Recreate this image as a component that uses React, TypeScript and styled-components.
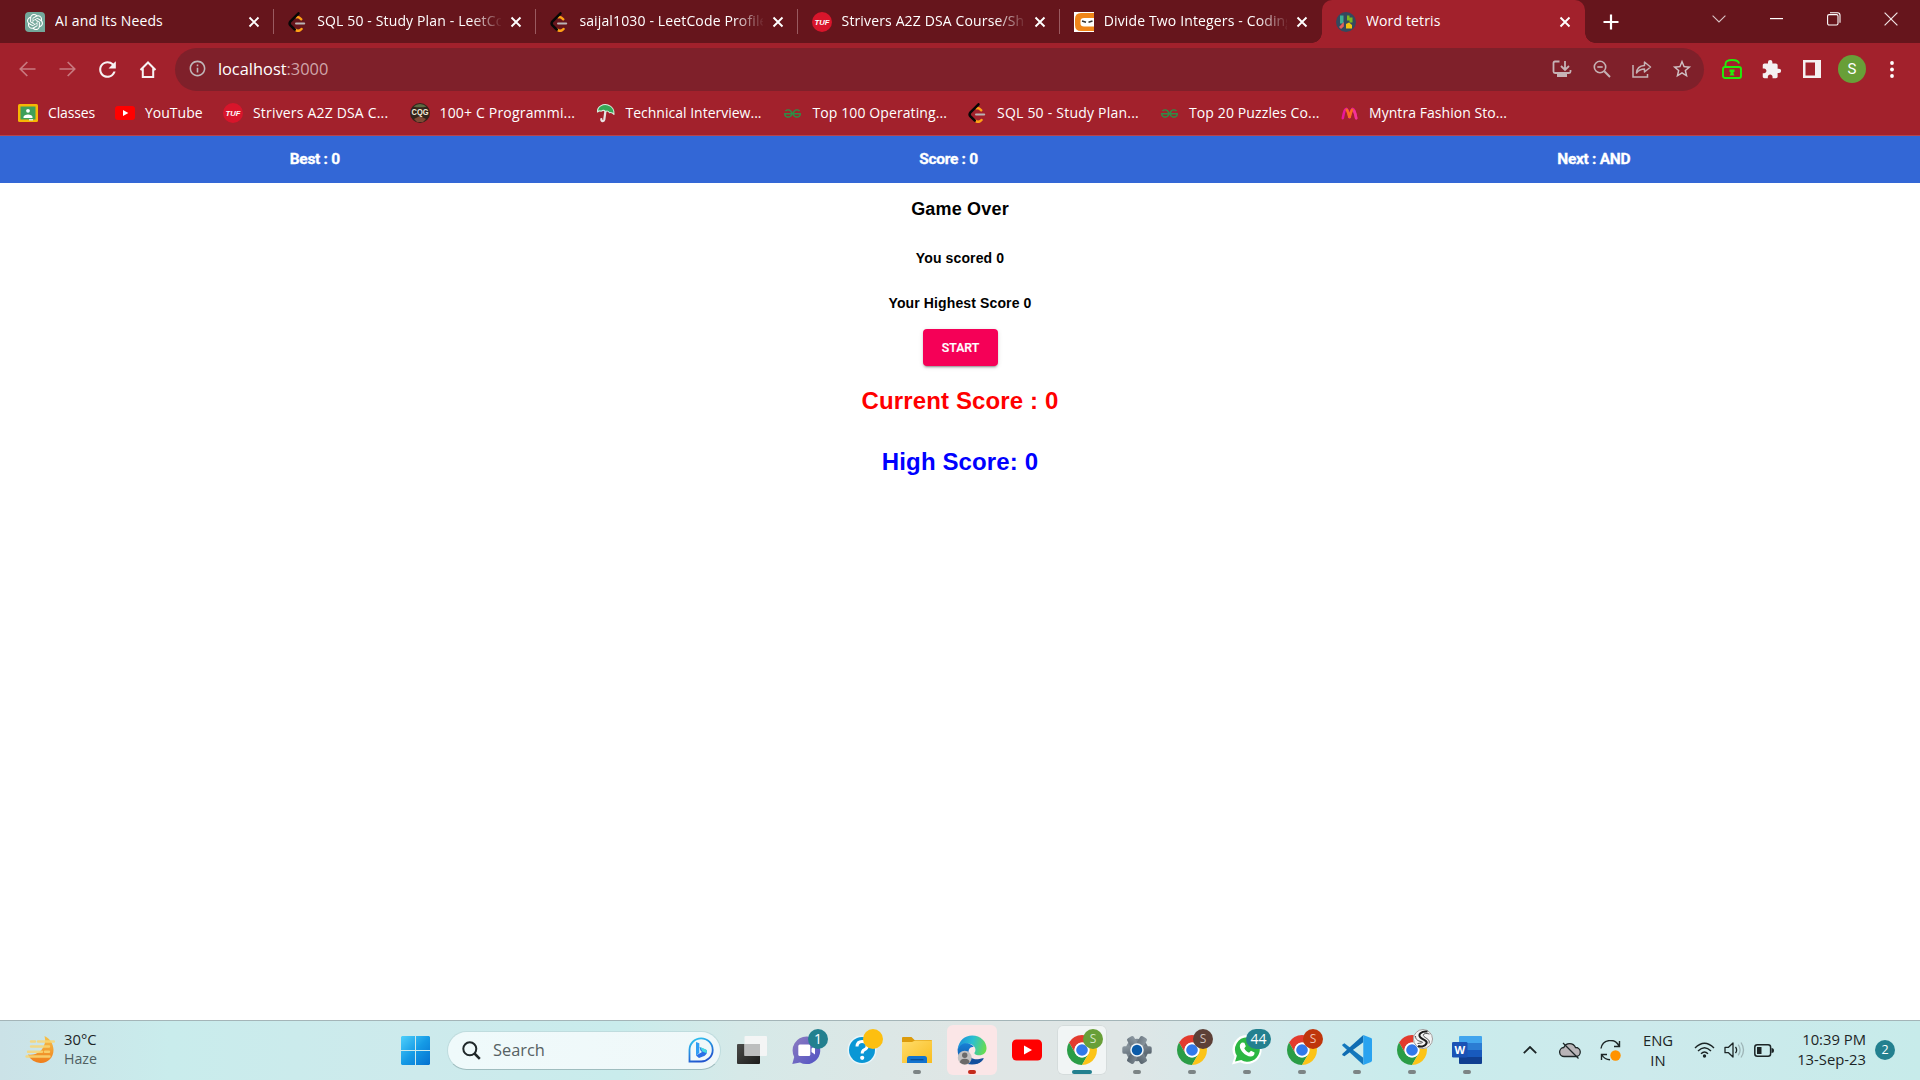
import React from "react";
import styled, { createGlobalStyle, css } from "styled-components";
import { SiOpenai, SiGeeksforgeeks } from "react-icons/si";
import { MdExtension, MdRefresh, MdInfoOutline, MdStarBorder } from "react-icons/md";

const UI = `"Open Sans", "Noto Sans", sans-serif`;

const Global = createGlobalStyle`
  * { box-sizing: border-box; }
  html, body { margin: 0; padding: 0; background: #fff; }
  svg { display: block; flex: none; }
`;

const Screen = styled.div`
  width: 1920px;
  height: 1080px;
  display: flex;
  flex-direction: column;
  overflow: hidden;
  background: #fff;
  font-family: ${UI};
`;

/* ---------- tab strip ---------- */

const TabStrip = styled.div`
  height: 43px;
  display: flex;
  background: #66151c;
  padding-left: 11.5px;
`;

const TabBox = styled.div<{ $active?: boolean; $divider?: boolean }>`
  position: relative;
  width: 262.2px;
  height: 43px;
  flex: none;
  display: flex;
  align-items: center;
  padding: 0 8px 0 13.5px;
  color: #fff;
  ${(p) =>
    p.$divider &&
    css`
      &::after {
        content: "";
        position: absolute;
        right: 0;
        top: 9px;
        width: 1px;
        height: 25px;
        background: #9a5a60;
      }
    `}
  ${(p) =>
    p.$active &&
    css`
      background: #a2212c;
      border-radius: 10px 10px 0 0;
      &::before,
      &::after {
        content: "";
        position: absolute;
        bottom: 0;
        width: 10px;
        height: 10px;
      }
      &::before {
        left: -10px;
        background: radial-gradient(circle at 0 0, transparent 9.5px, #a2212c 10px);
      }
      &::after {
        right: -10px;
        background: radial-gradient(circle at 100% 0, transparent 9.5px, #a2212c 10px);
      }
    `}
`;

const Favicon = styled.span`
  width: 20px;
  height: 20px;
  flex: none;
  display: flex;
  align-items: center;
  justify-content: center;
  margin-right: 10px;
`;

const TabTitle = styled.span<{ $fade?: boolean }>`
  flex: 1;
  min-width: 0;
  overflow: hidden;
  white-space: nowrap;
  font-size: 14px;
  line-height: 20px;
  padding-bottom: 2px;
  letter-spacing: 0.14px;
  ${(p) => p.$fade && css`mask-image: linear-gradient(90deg, #000 84%, transparent 101%);`}
`;

const CloseBox = styled.span`
  width: 24px;
  margin-left: 3px;
  display: flex;
  justify-content: center;
`;

const NewTab = styled.span`
  width: 28px;
  margin-left: 12.5px;
  display: flex;
  align-items: center;
  justify-content: center;
`;

const WindowControls = styled.div`
  margin-left: auto;
  height: 38px;
  display: flex;
`;

const ControlBox = styled.span`
  width: 57.5px;
  display: flex;
  align-items: center;
  justify-content: center;
`;

/* ---------- toolbar ---------- */

const Toolbar = styled.div`
  height: 53px;
  display: flex;
  align-items: center;
  background: #a2212c;
  padding: 0 8px 1px 7.5px;
`;

const Slot = styled.span`
  width: 40.1px;
  flex: none;
  display: flex;
  align-items: center;
  justify-content: center;
`;

const Omnibox = styled.div`
  height: 43px;
  width: 1530px;
  margin: 1px 7.600px 0 7px;
  border-radius: 22px;
  background: #7f202a;
  display: flex;
  align-items: center;
  padding: 0 2px 2px 13px;
`;

const Url = styled.span`
  margin-left: 11px;
  margin-right: auto;
  font-size: 16.4px;
  line-height: 24px;
  color: #fff;
`;

const Port = styled.span`
  color: #d0a5a9;
`;

const Avatar = styled.span`
  width: 28px;
  height: 28px;
  border-radius: 50%;
  background: #689f38;
  color: #fff;
  font: 400 15px/28px Roboto, sans-serif;
  text-align: center;
`;

/* ---------- bookmarks ---------- */

const Bookmarks = styled.div`
  height: 40px;
  display: flex;
  background: #a2212c;
  border-bottom: 1px solid #b5444d;
  padding: 0 0 5px 18px;
`;

const Bookmark = styled.div`
  display: flex;
  align-items: center;
  margin-right: 20px;
`;

const BookmarkLabel = styled.span<{ $w: number; $ls?: number }>`
  width: ${(p) => p.$w}px;
  font-size: 14px;
  line-height: 20px;
  padding-bottom: 1px;
  letter-spacing: ${(p) => p.$ls ?? 0}px;
  white-space: nowrap;
  color: #fff;
`;

/* ---------- page ---------- */

const ScoreBar = styled.header`
  height: 47px;
  background: #3367d6;
  display: flex;
  align-items: center;
  justify-content: space-around;
  padding-bottom: 2px;
`;

const ScoreItem = styled.span`
  color: #fff;
  font: 700 15.5px/20px Roboto, sans-serif;
  letter-spacing: -0.3px;
  -webkit-text-stroke: 0.3px #fff;
`;

const Game = styled.main`
  flex: 1;
  display: flex;
  flex-direction: column;
  align-items: center;
  font-family: "Liberation Sans", Arial, sans-serif;
  color: #000;
`;

const GameOver = styled.h3`
  margin: 15px 0 0;
  font-size: 18px;
  line-height: 22px;
  letter-spacing: 0.18px;
`;

const Note = styled.h5<{ $top: number }>`
  margin: ${(p) => p.$top}px 0 0;
  font-size: 14px;
  line-height: 16px;
  letter-spacing: 0.12px;
`;

const StartButton = styled.button`
  margin: 18px 0 0 1px;
  width: 75px;
  height: 37px;
  padding: 1px 0 0;
  border: 0;
  border-radius: 4px;
  background: #f50057;
  color: #fff;
  font: 500 12.300px/20px Roboto, sans-serif;
  -webkit-text-stroke: 0.2px #fff;
  box-shadow: 0 3px 1px -2px rgba(0, 0, 0, 0.2), 0 2px 2px rgba(0, 0, 0, 0.14), 0 1px 5px rgba(0, 0, 0, 0.12);
`;

const BigScore = styled.h2<{ $color: string; $top: number }>`
  margin: ${(p) => p.$top}px 0 0;
  font-size: 24px;
  line-height: 28px;
  letter-spacing: 0.12px;
  color: ${(p) => p.$color};
`;

/* ---------- taskbar ---------- */

const Taskbar = styled.footer`
  height: 60px;
  display: flex;
  align-items: center;
  padding-bottom: 1px;
  border-top: 1px solid #a4b5b8;
  background: linear-gradient(90deg, #cbe2e7 0, #c9ecec 170px, #cdeaec 420px, #c9ecec 620px, #d6e9e8 740px, #dfe6e5 960px, #dfe6e6 1120px, #d0e9ec 1290px, #c9ecec 1400px, #cdeaec 1640px, #c7ebea 1920px);
`;

const Weather = styled.div`
  width: 388px;
  display: flex;
  align-items: center;
  padding-left: 24.500px;
  gap: 9.500px;
`;

const Stack = styled.div<{ $align?: string; $w?: number; $lift?: number }>`
  display: flex;
  flex-direction: column;
  text-align: ${(p) => p.$align ?? "left"};
  width: ${(p) => (p.$w ? p.$w + "px" : "auto")};
  padding-bottom: ${(p) => p.$lift ?? 0}px;
  font-size: 14.800px;
  line-height: 20px;
  color: #1c2526;
  white-space: nowrap;
`;

const Muted = styled.span`
  font-size: 14.200px;
  color: #4f6062;
`;

const SearchPill = styled.div`
  width: 274px;
  height: 39px;
  margin: 0 3.500px 0 4px;
  border-radius: 20px;
  background: linear-gradient(90deg, #effafb, #f0f8f9);
  border: 1px solid #bfdcde;
  border-bottom-color: #9fbdbf;
  display: flex;
  align-items: center;
  padding: 0 6px 0 14px;
`;

const SearchText = styled.span`
  flex: 1;
  margin-left: 12px;
  font-size: 16.400px;
  line-height: 22px;
  color: #566163;
`;

const TaskSlot = styled.div`
  width: 55px;
  height: 58px;
  flex: none;
  display: flex;
  align-items: center;
  justify-content: center;
`;

const Tile = styled.div<{ $tint?: string; $edge?: string }>`
  position: relative;
  width: 50px;
  height: 50px;
  border-radius: 6px;
  background: ${(p) => p.$tint ?? "transparent"};
  box-shadow: ${(p) => (p.$edge ? `inset 0 0 0 1px ${p.$edge}` : "none")};
  display: flex;
  align-items: center;
  justify-content: center;
`;

const Dot = styled.span<{ $w: number; $color: string }>`
  position: absolute;
  left: 50%;
  bottom: 1px;
  width: ${(p) => p.$w}px;
  height: 4px;
  margin-left: ${(p) => -p.$w / 2}px;
  border-radius: 2px;
  background: ${(p) => p.$color};
`;

const Badge = styled.span<{ $bg: string; $fg?: string; $w?: number; $size?: number }>`
  position: absolute;
  top: 4px;
  left: ${(p) => (p.$w ? 24 : 26)}px;
  width: ${(p) => p.$w ?? 20}px;
  height: 20px;
  border-radius: 10px;
  background: ${(p) => p.$bg};
  color: ${(p) => p.$fg ?? "#fff"};
  font-size: ${(p) => p.$size ?? 14}px;
  line-height: 20px;
  text-align: center;
`;

const Tray = styled.div`
  margin-left: auto;
  display: flex;
  align-items: center;
  padding-right: 25px;
`;

const TraySlot = styled.span<{ $w: number }>`
  width: ${(p) => p.$w}px;
  display: flex;
  justify-content: center;
`;

const Count = styled.span`
  width: 20px;
  height: 20px;
  margin-left: 9px;
  border-radius: 50%;
  background: #23808f;
  color: #fff;
  font-size: 12.500px;
  line-height: 19px;
  text-align: center;
`;

/* ---------- drawings ---------- */

const Close = () => (
  <svg width="12" height="12" viewBox="0 0 12 12" stroke="#fff" strokeWidth="1.9"><path d="M1.5 1.5l9 9M10.5 1.5l-9 9" /></svg>
);

const OpenAi = () => (
  <svg width="20" height="20" viewBox="0 0 20 20">
    <path d="M4 0h12a4 4 0 014 4v16H4a4 4 0 01-4-4V4a4 4 0 014-4z" fill="#74a89b" />
    <SiOpenai x="2" y="2" width="16" height="16" color="#fff" />
  </svg>
);

const LeetCode = () => (
  <svg width="20" height="20" viewBox="0 0 20 20" fill="none" strokeWidth="2.5" strokeLinecap="round">
    <path d="M9.500 5.300c1.500-.8 3 0 4.700 2M8.500 17.800c2 1.700 4 1.300 6-.8" stroke="#ffa116" />
    <path d="M11.500 1.300L3.500 9.300c-1.200 1.400-1.200 2.800 0 4.200l4.300 4.200" stroke="#070706" />
    <path d="M9 11.500h8.200" stroke="#b9b4b4" strokeWidth="2" />
  </svg>
);

const Tuf = () => (
  <svg width="20" height="20" viewBox="0 0 20 20">
    <circle cx="10" cy="10" r="10" fill="#d8152b" />
    <text x="10" y="12.500" textAnchor="middle" fontSize="6.500" fontWeight="700" fontStyle="italic" fontFamily="Liberation Sans, sans-serif" fill="#fff" textLength="15" lengthAdjust="spacingAndGlyphs">TUF</text>
  </svg>
);

const CodingNinjas = () => (
  <svg width="20" height="20" viewBox="0 0 20 20">
    <path d="M0 0h20v20H0z" fill="#fff" />
    <path d="M20 1H7Q1 1 1 7v6q0 6 6 6h13v-4.500H10q-3.500 0-3.500-3V9q0-3 3.500-3h10z" fill="#f08519" />
    <path d="M8 9l4 1.200M14.500 10.200l4-1.200" stroke="#333" strokeWidth="1.500" />
  </svg>
);

const WordTetris = () => (
  <svg width="20" height="20" viewBox="0 0 20 20">
    <circle cx="10" cy="10" r="10" fill="#34495e" />
    <path d="M4 3.500h3.500v8H4z" fill="#3fae95" />
    <path d="M11 3.500h2.500v2h3v5h-3V8.500H11z" fill="#7cb51f" />
    <path d="M7.800 10v4.500L5 17l-2-2z" fill="#e2605c" />
    <path d="M10 12l3-1.500 3 2.500v3.500h-6z" fill="#f1c40f" />
  </svg>
);

const Classroom = () => (
  <svg width="20" height="18" viewBox="0 0 20 18">
    <rect width="20" height="18" rx="1.500" fill="#f6b704" />
    <rect x="2.500" y="2.500" width="15" height="13" fill="#3f9f59" />
    <circle cx="10" cy="6.800" r="1.900" fill="#fff" />
    <path d="M5.500 13c0-3.500 9-3.500 9 0v1h-9z" fill="#fff" />
    <path d="M11 15h4v1.500h-4z" fill="#d5e8da" />
  </svg>
);

const YouTube = ({ w, h }: { w: number; h: number }) => (
  <svg width={w} height={h} viewBox="0 0 30 21">
    <rect width="30" height="21" rx="4.500" fill="#f00" />
    <path d="M12 6v9l8-4.500z" fill="#fff" />
  </svg>
);

const Cqg = () => (
  <svg width="20" height="20" viewBox="0 0 20 20">
    <circle cx="10" cy="10" r="10" fill="#33241b" />
    <path d="M3.500 3.500a9.500 9.500 0 0113 0l-3 .8H6.500z" fill="#5d6a42" />
    <path d="M4 16l6-3 6 3-3 3H7z" fill="#7d4a35" />
    <text x="10" y="11.500" textAnchor="middle" fontSize="9" fontWeight="700" fontFamily="Liberation Sans, sans-serif" fill="#f5eddc" textLength="17" lengthAdjust="spacingAndGlyphs">CQG</text>
  </svg>
);

const Umbrella = () => (
  <svg width="20" height="20" viewBox="0 0 20 20">
    <path d="M9.500 7.500l-1.200 9c-.4 2.200-3.200 2-3-.3" fill="none" stroke="#e8e3e3" strokeWidth="2.200" strokeLinecap="round" />
    <path d="M1.500 9C1 3.500 7 .5 12 2c4 1.200 6.500 5 6 9.500-1.500-1.800-3-2.200-4.500-1.800-1-1.500-2.600-2-4-1.300-1.300-1.200-3-1.200-4.200-.2C4 7.700 2.500 8 1.500 9z" fill="#35a857" stroke="#d9efe0" strokeWidth="1.100" strokeLinejoin="round" />
  </svg>
);

const Myntra = () => (
  <svg width="17" height="13" viewBox="0 0 18 14" fill="none" strokeLinecap="round" strokeWidth="2.800">
    <path d="M1.800 12Q3.500 2 5.500 2q1.500 0 3.500 9" stroke="#e8179b" />
    <path d="M9 11q2-9 3.500-9 2 0 3.700 10" stroke="#e8179b" />
    <path d="M6 3q1.200 1 3 8.500Q10.800 4 12 3" stroke="#fa6b21" />
    <path d="M14 4.500q1.200 2.500 2.200 7.500" stroke="#f43397" />
  </svg>
);

const Chrome = () => (
  <svg width="30" height="30" viewBox="0 0 48 48">
    <path d="M44.780 12A24 24 0 003.220 12L13.610 30A12 12 0 0124 12z" fill="#e33b2e" />
    <path d="M3.220 12A24 24 0 0024 48L34.390 30A12 12 0 0113.610 30z" fill="#2a9d46" />
    <path d="M24 48A24 24 0 0044.780 12H24A12 12 0 0134.390 30z" fill="#fcc418" />
    <circle cx="24" cy="24" r="12" fill="#fff" />
    <circle cx="24" cy="24" r="9.300" fill="#3279ea" />
  </svg>
);

const Haze = () => (
  <svg width="30" height="30" viewBox="0 0 30 30">
    <defs><linearGradient id="moon" x1="0" y1="0" x2="0" y2="1"><stop stopColor="#f5c34d" /><stop offset="1" stopColor="#ef7d1a" /></linearGradient></defs>
    <path d="M19.500 1A14.500 14.500 0 013 19.500a13.200 13.200 0 0013 8.500c7 0 12.500-5.500 12.500-13 0-6.500-4-11.500-9-14z" fill="url(#moon)" />
    <path d="M6 6.500h4M13 6.500h16M6 11.500h18M3 16.700h14M20 16.700h4M1.500 21.500h23" stroke="#f9d774" strokeWidth="2.400" strokeLinecap="round" opacity=".85" />
  </svg>
);

const Windows = () => (
  <svg width="29" height="29" viewBox="0 0 29 29">
    <defs><linearGradient id="win" x1="0" y1="0" x2="1" y2="1"><stop stopColor="#4fd0fb" /><stop offset=".5" stopColor="#159be6" /><stop offset="1" stopColor="#0470cf" /></linearGradient></defs>
    <path d="M1 0h13v14H0V1zM15 0h13l1 1v13H15zM0 15h14v14H1l-1-1zM15 15h14v13l-1 1H15z" fill="url(#win)" />
  </svg>
);

const Magnifier = () => (
  <svg width="19" height="19" viewBox="0 0 19 19" fill="none" stroke="#20282a" strokeWidth="2"><circle cx="7.800" cy="7.800" r="6.500" /><path d="M12.500 12.500l5.300 5.300" strokeWidth="2.500" /></svg>
);

const Bing = () => (
  <svg width="26" height="26" viewBox="0 0 26 26">
    <defs><linearGradient id="bing" x1="0" y1="0" x2=".4" y2="1"><stop stopColor="#2ecbf2" /><stop offset="1" stopColor="#2156cf" /></linearGradient></defs>
    <path d="M1.500 24.500V13A11.600 11.600 0 1113 24.500z" fill="none" stroke="url(#bing)" strokeWidth="1.800" />
    <path d="M8 5l3.300 1.200V16l-3.300 2.500z" fill="#2f9df4" />
    <path d="M11.500 10l7 3c1.500 2.500-.5 5.500-3 6.300l-4.500 1.700-3-2.500 6-3.500-1.500-1.500z" fill="#2a6fe6" />
    <path d="M12 10l6 2.600c1 1 1.200 2.500.6 3.600l-4.300-1.700z" fill="#45d6e0" />
  </svg>
);

const TaskView = () => (
  <svg width="30" height="28" viewBox="0 0 30 28">
    <defs><linearGradient id="tv" x1="0" y1="0" x2="1" y2="1"><stop stopColor="#4b4b49" /><stop offset="1" stopColor="#1c1c1b" /></linearGradient></defs>
    <rect y="8" width="23" height="20" rx="1" fill="url(#tv)" />
    <rect x="7.500" width="22.500" height="20" rx="1" fill="#f5f6f6" opacity=".95" />
    <path d="M7.500 8H23v12H7.500z" fill="#bdbebe" />
  </svg>
);

const Chat = () => (
  <svg width="30" height="30" viewBox="0 0 30 30">
    <defs><linearGradient id="chat" x1="0" y1="0" x2="1" y2="1"><stop stopColor="#8f7dc0" /><stop offset="1" stopColor="#4f52c4" /></linearGradient></defs>
    <path d="M14.500 1.500a13.800 13.800 0 11-6.500 26L.3 29 2.200 22A14 14 0 0114.500 1.500z" fill="url(#chat)" />
    <rect x="6.300" y="9.500" width="12" height="11.500" rx="1.500" fill="#fff" />
    <path d="M19.500 13.500L23 11v8.500L19.500 17z" fill="#fff" />
  </svg>
);

const Help = () => (
  <svg width="30" height="30" viewBox="0 0 30 30">
    <circle cx="15" cy="15" r="14.500" fill="#e9f6fa" />
    <circle cx="15" cy="15" r="13" fill="#0a97d5" />
    <path d="M10 11.500q.3-5 5-5 5.200 0 5.200 4.400 0 2.600-3 4-2 1-2 3.600" fill="none" stroke="#fff" strokeWidth="3" />
    <circle cx="15.200" cy="22.800" r="2.100" fill="#fff" />
  </svg>
);

const Folder = () => (
  <svg width="30" height="26" viewBox="0 0 30 26">
    <defs><linearGradient id="fold" x1="0" y1="0" x2="1" y2="1"><stop stopColor="#ffdc6a" /><stop offset="1" stopColor="#f9bd20" /></linearGradient></defs>
    <path d="M0 1q0-1 1-1h8.500l3 3H29q1 0 1 1v4H0z" fill="#dc9b0c" />
    <path d="M0 5h10l3-1.500h17V26H0z" fill="url(#fold)" />
    <path d="M5 26v-4.500q0-2.500 2.500-2.500h15q2.500 0 2.500 2.500V26z" fill="#1273cf" />
    <path d="M8.500 22.700h13" stroke="#0a4b91" strokeWidth="1.200" />
  </svg>
);

const Edge = () => (
  <svg width="30" height="30" viewBox="0 0 31 31">
    <defs>
      <linearGradient id="e1" x1="0" y1=".3" x2="1" y2=".5"><stop stopColor="#1b8fdc" /><stop offset=".5" stopColor="#2bbfd0" /><stop offset="1" stopColor="#68dc50" /></linearGradient>
      <linearGradient id="e2" x1="0" y1="0" x2="0" y2="1"><stop stopColor="#1880d6" /><stop offset="1" stopColor="#0f4f9e" /></linearGradient>
    </defs>
    <path d="M.6 15C2 5.500 8 .5 15.700.5 24.500.5 30.500 7 30.500 13.500c0 5-3.500 7.500-7.500 7.500-4 0-5.500-1.500-4.800-2.800C20.500 15 18.500 10 12.500 9 7 8.500 2.500 11 .6 15z" fill="url(#e1)" />
    <path d="M.6 15C3 9.500 8 7.800 12.500 9c3 .8 4.300 2.200 4.800 3.500-2-.8-5 .5-5.500 4.500-.5 6 5 11.500 13 9.500l2-1C24 29 20 30.500 15.500 30.500 7 30.500.5 24 .6 15z" fill="url(#e2)" />
    <path d="M12 17c-.5 6 5 9 11 7.800 2-.4 3.500-1 4.600-.8.600.500-2.500 4-6.600 5.500C14 31 9 24 12 17z" fill="#134f9c" />
    <circle cx="8" cy="23.500" r="7.200" fill="#c3c1c0" />
    <circle cx="8" cy="21" r="2.800" fill="#6b6a69" />
    <path d="M3 28.500q0-4 5-4t5 4q-5 4-10 0z" fill="#6b6a69" />
  </svg>
);

const Gear = () => (
  <svg width="30" height="30" viewBox="0 0 31 31">
    <defs><linearGradient id="gear" x1="0" y1="0" x2="1" y2="1"><stop stopColor="#8e9aa3" /><stop offset="1" stopColor="#56626c" /></linearGradient></defs>
    <g fill="url(#gear)">
      <circle cx="15.500" cy="15.500" r="11.700" />
      {[0, 60, 120].map((a) => (
        <rect key={a} x=".3" y="11.500" width="30.400" height="8" rx="2" transform={`rotate(${a} 15.500 15.500)`} />
      ))}
    </g>
    <circle cx="15.500" cy="15.500" r="7" fill="#eef5fa" />
    <circle cx="15.500" cy="15.500" r="5.400" fill="#0a5aa8" />
  </svg>
);

const WhatsApp = () => (
  <svg width="30" height="30" viewBox="0 0 31 31">
    <path d="M15.800 0A15 15 0 118.500 28.200L0 30.500l2.600-8A15 15 0 0115.800 0z" fill="#fff" />
    <path d="M15.800 2.200a12.700 12.700 0 11-6.300 23.600L3.200 27.500l1.800-6A12.700 12.700 0 0115.800 2.200z" fill="#2cb742" />
    <path d="M10.300 7.800l2.500.1 1.500 3.800-1.600 2c1 2.200 2.700 3.600 4.900 4.700l2-2 3.700 1.800c.2 2.600-1.600 4-4 4.100C13.500 21.500 8.200 16 8.100 11.500c0-1.600.8-3 2.200-3.700z" fill="#fff" />
  </svg>
);

const VsCode = () => (
  <svg width="30" height="30" viewBox="0 0 31 31">
    <path d="M2.500 8.500L22 23.500V31L.5 11.200q-.6-.8 0-1.400z" fill="#1478bd" />
    <path d="M2.500 22L22 7.500V0L.5 19.500q-.6.8 0 1.400z" fill="#0f6cb2" />
    <path d="M22 0l8 3.200q1 .5 1 1.500v21.600q0 1-1 1.500L22 31z" fill="#29a3f0" />
  </svg>
);

const SwirlBadge = styled(Badge)`
  display: flex;
`;

const Swirl = () => (
  <svg width="20" height="20" viewBox="0 0 20 20" fill="none">
    <circle cx="10" cy="10" r="9.500" fill="#f4f4f4" stroke="#9a9a9a" />
    <path d="M14.500 2.500C8 2 4.500 5.500 7.500 8.500s7.500 2.500 6 6-6.500 3.500-8.500 2.500" stroke="#1c1c1c" strokeWidth="2" />
    <path d="M16.500 5c-5-1.500-7.500.5-5.500 2.500s6.500 3 5 7M2.500 7c0 4 3 5 5.500 5.500s2.500 1.500-3.500 2" stroke="#555" strokeWidth="1" />
  </svg>
);

const Word = () => (
  <svg width="30" height="28" viewBox="0 0 30 28">
    <path d="M8 0h21q1 0 1 1v6H7V1q0-1 1-1z" fill="#41a5ee" />
    <path d="M7 7h23v7H7z" fill="#2b7cd3" />
    <path d="M7 14h23v7H7z" fill="#185abd" />
    <path d="M7 21h23v6q0 1-1 1H8q-1 0-1-1z" fill="#103f91" />
    <rect y="6" width="15.500" height="15.500" rx="1.300" fill="#1a52b5" />
    <text x="7.700" y="17.700" textAnchor="middle" fontSize="11" fontWeight="700" fontFamily="Open Sans, sans-serif" fill="#fff">W</text>
  </svg>
);

/* ---------- data ---------- */

const tabs = [
  { title: "AI and Its Needs", icon: <OpenAi /> },
  { title: "SQL 50 - Study Plan - LeetCode", icon: <LeetCode />, fade: true },
  { title: "saijal1030 - LeetCode Profile", icon: <LeetCode />, fade: true },
  { title: "Strivers A2Z DSA Course/Sheet", icon: <Tuf />, fade: true },
  { title: "Divide Two Integers - Coding Ninjas", icon: <CodingNinjas />, fade: true },
  { title: "Word tetris", icon: <WordTetris />, active: true },
];

const bookmarks = [
  { label: "Classes", w: 47, ls: -0.15, icon: <Classroom /> },
  { label: "YouTube", w: 58, icon: <YouTube w={20} h={14} /> },
  { label: "Strivers A2Z DSA C...", w: 136.5, ls: 0.18, icon: <Tuf /> },
  { label: "100+ C Programmi...", w: 136, ls: 0.18, icon: <Cqg /> },
  { label: "Technical Interview...", w: 137, icon: <Umbrella /> },
  { label: "Top 100 Operating...", w: 134.5, ls: 0.1, icon: <SiGeeksforgeeks size={17} color="#2f8d46" /> },
  { label: "SQL 50 - Study Plan...", w: 142, ls: 0.22, icon: <LeetCode /> },
  { label: "Top 20 Puzzles Co...", w: 130, ls: 0.12, icon: <SiGeeksforgeeks size={17} color="#2f8d46" /> },
  { label: "Myntra Fashion Sto...", w: 138, ls: 0.05, icon: <Myntra /> },
];

const GREY = "#7c8485";
const apps = [
  { id: "taskview", icon: <TaskView /> },
  { id: "chat", icon: <Chat />, badge: <Badge $bg="#23808f">1</Badge> },
  { id: "help", icon: <Help />, badge: <Badge $bg="#fdbf10" /> },
  { id: "files", icon: <Folder />, dot: GREY },
  { id: "edge", icon: <Edge />, dot: "#c42b1c", tint: "#fbe6e7" },
  { id: "youtube", icon: <YouTube w={30} h={22} /> },
  { id: "chrome1", icon: <Chrome />, badge: <Badge $bg="#689f38" $fg="#d3e5c3" $size={12}>S</Badge>, dot: "#23808f", wide: true, tint: "#f1f5f5", edge: "#d5dcdc" },
  { id: "settings", icon: <Gear />, dot: GREY },
  { id: "chrome2", icon: <Chrome />, badge: <Badge $bg="#5d4037" $fg="#cdbfba" $size={12}>S</Badge>, dot: GREY },
  { id: "whatsapp", icon: <WhatsApp />, badge: <Badge $bg="#23808f" $w={25}>44</Badge>, dot: GREY },
  { id: "chrome3", icon: <Chrome />, badge: <Badge $bg="#bf360c" $fg="#f0c0b0" $size={12}>S</Badge>, dot: GREY },
  { id: "vscode", icon: <VsCode />, dot: GREY },
  { id: "chrome4", icon: <Chrome />, badge: <SwirlBadge $bg="#fff"><Swirl /></SwirlBadge>, dot: GREY },
  { id: "word", icon: <Word />, dot: GREY },
];

export default function App() {
  return (
    <Screen>
      <Global />
      <TabStrip>
        {tabs.map((t, i) => (
          <TabBox key={t.title} $active={t.active} $divider={i < 4}>
            <Favicon>{t.icon}</Favicon>
            <TabTitle $fade={t.fade}>{t.title}</TabTitle>
            <CloseBox><Close /></CloseBox>
          </TabBox>
        ))}
        <NewTab>
          <svg width="16" height="16" viewBox="0 0 16 16" stroke="#fff" strokeWidth="2.200"><path d="M8 .5v15M.5 8h15" /></svg>
        </NewTab>
        <WindowControls>
          <ControlBox><svg width="14" height="8" viewBox="0 0 14 8" fill="none" stroke="#d9c4c6" strokeWidth="1.100"><path d="M.6.6L7 7 13.400.6" /></svg></ControlBox>
          <ControlBox><svg width="13" height="2" viewBox="0 0 13 2"><path d="M0 0h13v1.200H0z" fill="#fff" /></svg></ControlBox>
          <ControlBox><svg width="14" height="14" viewBox="0 0 14 14" fill="none" stroke="#fff" strokeWidth="1.100"><rect x=".6" y="2.600" width="10.400" height="10.400" rx="1.500" /><path d="M3 .8h7.500q2.500 0 2.500 2.500v7.500" /></svg></ControlBox>
          <ControlBox><svg width="14" height="14" viewBox="0 0 14 14" stroke="#f0e4e5" strokeWidth="1.200"><path d="M.6.6l12.800 12.800M13.400.6L.6 13.400" /></svg></ControlBox>
        </WindowControls>
      </TabStrip>

      <Toolbar>
        <Slot><svg width="17" height="16" viewBox="0 0 17 16" fill="none" stroke="#c87a80" strokeWidth="1.700"><path d="M16.500 8H1.500M8.300 1L1.300 8l7 7" /></svg></Slot>
        <Slot><svg width="17" height="16" viewBox="0 0 17 16" fill="none" stroke="#c87a80" strokeWidth="1.700"><path d="M.5 8h15M8.700 1l7 7-7 7" /></svg></Slot>
        <Slot><MdRefresh size={25} color="#f7f2f3" /></Slot>
        <Slot><svg width="18" height="17" viewBox="0 0 18 17" fill="none" stroke="#f7f2f3" strokeWidth="2"><path d="M1.500 9L9 1.500 16.500 9M3.800 7.500V16h10.400V7.500" /></svg></Slot>
        <Omnibox>
          <MdInfoOutline size={19} color="#c0b6b9" />
          <Url>localhost<Port>:3000</Port></Url>
          <Slot><svg width="20" height="18" viewBox="0 0 20 18" fill="none" stroke="#c6b2b5" strokeWidth="1.800"><path d="M7.500 1.500H3q-1.500 0-1.500 1.500v8.500Q1.500 13 3 13h14q1.500 0 1.500-1.500V10M13 1v8M9 6l4 4 4-4" /><path d="M5 13h10v4H5z" fill="#c6b2b5" stroke="none" /></svg></Slot>
          <Slot><svg width="18" height="18" viewBox="0 0 18 18" fill="none" stroke="#c6b2b5" strokeWidth="1.600"><circle cx="7" cy="7" r="5.700" /><path d="M11.300 11.300l5.700 5.700" strokeWidth="2" /><path d="M4.300 7h5.400" /></svg></Slot>
          <Slot><svg width="20" height="18" viewBox="0 0 20 18" fill="none" stroke="#c6b2b5" strokeWidth="1.500"><path d="M1 5v12h14.500v-3" /><path d="M4.500 13q.5-7 8-7.500V2l6 5-6 5V9q-5 0-8 4z" strokeLinejoin="round" /></svg></Slot>
          <Slot><MdStarBorder size={22} color="#d0c1c4" /></Slot>
        </Omnibox>
        <Slot><svg width="20" height="20" viewBox="0 0 20 20" fill="none" stroke="#22ee0c" strokeWidth="1.900"><rect x="1" y="8" width="18" height="11" rx="2" /><path d="M3.500 8V5Q3.500 1 10 1t7 3.500" /><path d="M7.500 10.500h5v2.500h-1v1.500l1 2h-5l1-2V13h-1z" fill="#22ee0c" stroke="none" /></svg></Slot>
        <Slot><MdExtension size={21} color="#f4f0f1" /></Slot>
        <Slot><svg width="18" height="18" viewBox="0 0 18 18"><path fillRule="evenodd" d="M0 0h18v18H0zM2.500 2.500v13h9.500v-13z" fill="#f4f0f1" /></svg></Slot>
        <Slot><Avatar>S</Avatar></Slot>
        <Slot><svg width="4" height="17" viewBox="0 0 4 17" fill="#fff"><circle cx="2" cy="2" r="1.900" /><circle cx="2" cy="8.500" r="1.900" /><circle cx="2" cy="15" r="1.900" /></svg></Slot>
      </Toolbar>

      <Bookmarks>
        {bookmarks.map((b) => (
          <Bookmark key={b.label}>
            <Favicon>{b.icon}</Favicon>
            <BookmarkLabel $w={b.w} $ls={b.ls}>{b.label}</BookmarkLabel>
          </Bookmark>
        ))}
      </Bookmarks>

      <ScoreBar>
        <ScoreItem>Best : 0</ScoreItem>
        <ScoreItem>Score : 0</ScoreItem>
        <ScoreItem>Next : AND</ScoreItem>
      </ScoreBar>

      <Game>
        <GameOver>Game Over</GameOver>
        <Note $top={30}>You scored 0</Note>
        <Note $top={29}>Your Highest Score 0</Note>
        <StartButton>START</StartButton>
        <BigScore $color="#f00" $top={21}>Current Score : 0</BigScore>
        <BigScore $color="#00f" $top={33}>High Score: 0</BigScore>
      </Game>

      <Taskbar>
        <Weather>
          <Haze />
          <Stack $lift={2}>
            <span>30°C</span>
            <Muted>Haze</Muted>
          </Stack>
        </Weather>
        <TaskSlot><Windows /></TaskSlot>
        <SearchPill>
          <Magnifier />
          <SearchText>Search</SearchText>
          <Bing />
        </SearchPill>
        {apps.map((a) => (
          <TaskSlot key={a.id}>
            <Tile $tint={a.tint} $edge={a.edge}>
              {a.icon}
              {a.badge}
              {a.dot && <Dot $w={a.wide ? 20 : 8} $color={a.dot} />}
            </Tile>
          </TaskSlot>
        ))}
        <Tray>
          <TraySlot $w={40}><svg width="14" height="8" viewBox="0 0 14 8" fill="none" stroke="#1c2526" strokeWidth="1.800"><path d="M.8 7.200L7 1l6.200 6.200" /></svg></TraySlot>
          <TraySlot $w={40}><svg width="22" height="17" viewBox="0 0 22 17" fill="none" stroke="#1c2526" strokeWidth="1.300"><path d="M5.500 14.500a4.500 4.500 0 01-.7-9A6.300 6.300 0 0116.500 5.500a4.500 4.500 0 01.5 9z" fill="#b9b5b8" /><path d="M4 1l15.500 15.500" /></svg></TraySlot>
          <TraySlot $w={40}><svg width="21" height="21" viewBox="0 0 21 21" fill="none" stroke="#1c2526" strokeWidth="1.400"><path d="M1 8.500A9.500 9.500 0 0119 6M19.500 1v5.500H14M10 19.800A9.500 9.500 0 012 15M1.500 20v-5.500H7" /><circle cx="15.500" cy="15.500" r="5.200" fill="#ff9300" stroke="none" /></svg></TraySlot>
          <Stack $align="center" $w={56}><span>ENG</span><span>IN</span></Stack>
          <TraySlot $w={37}><svg width="21" height="16" viewBox="0 0 21 16" fill="none" stroke="#1c2526" strokeWidth="1.400"><path d="M1 6q9.500-9.500 19 0M4 9q6.500-6.500 13 0M7 11.800q3.500-3.500 7 0" /><circle cx="10.500" cy="14" r="1.700" fill="#1c2526" stroke="none" /></svg></TraySlot>
          <TraySlot $w={23}><svg width="21" height="18" viewBox="0 0 21 18" fill="none" stroke="#1c2526" strokeWidth="1.300"><path d="M1 6.300h3.500L9 2v14l-4.500-4.300H1z" strokeLinejoin="round" /><path d="M11.500 5.800q2.300 3.200 0 6.400" /><path d="M14.200 3.700q3.800 5.300 0 10.600M17 1.500q5 7.500 0 15" stroke="#9db4b6" /></svg></TraySlot>
          <TraySlot $w={36}><svg width="20" height="13" viewBox="0 0 20 13"><rect x=".8" y=".8" width="15.800" height="11.400" rx="2.500" fill="none" stroke="#1c2526" strokeWidth="1.500" /><path d="M3 3h4.500v7H3zM17.500 4q2.500 0 2.500 2.500T17.500 9z" fill="#1c2526" /></svg></TraySlot>
          <Stack $align="right" $w={84} $lift={3}><span>10:39 PM</span><span>13-Sep-23</span></Stack>
          <Count>2</Count>
        </Tray>
      </Taskbar>
    </Screen>
  );
}
